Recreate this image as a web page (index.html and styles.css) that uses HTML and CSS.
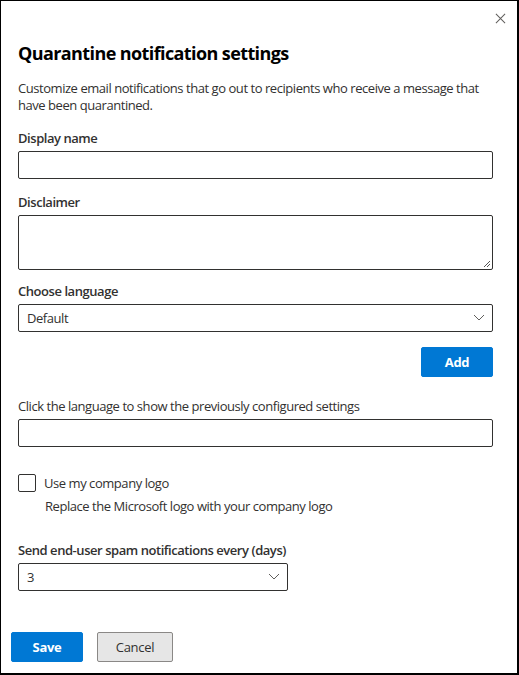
FILE: index.html
```html
<!DOCTYPE html>
<html>
<head>
<meta charset="utf-8">
<link rel="stylesheet" href="styles.css">
</head>
<body>
<div class="panel">
  <div class="top">
    <button class="close" aria-label="Close">
      <svg width="12" height="12" viewBox="0 0 12 12"><path d="M1 1L11 11M11 1L1 11" stroke="#605e5c" stroke-width="1.1" fill="none"/></svg>
    </button>
  </div>
  <h1 class="title">Quarantine notification settings</h1>
  <p class="desc">Customize email notifications that go out to recipients who receive a message that have been quarantined.</p>

  <div class="field first">
    <label class="label">Display name</label>
    <div class="input"></div>
  </div>
  <div class="field f2">
    <label class="label">Disclaimer</label>
    <div class="textarea">
      <svg class="grip" width="9" height="9" viewBox="0 0 9 9"><path d="M8 2L2 8M8 5L5 8" stroke="#555" stroke-width="1"/></svg>
    </div>
  </div>
  <div class="field f3">
    <label class="label">Choose language</label>
    <div class="select">
      <span>Default</span>
      <svg class="chev" width="12" height="7" viewBox="0 0 12 7"><path d="M1 1L6 6L11 1" stroke="#605e5c" stroke-width="1" fill="none"/></svg>
    </div>
  </div>
  <div class="addrow"><button class="btn primary">Add</button></div>

  <div class="field after-add">
    <label class="label normal">Click the language to show the previously configured settings</label>
    <div class="input"></div>
  </div>

  <div class="check">
    <span class="box"></span>
    <span class="checktext">Use my company logo</span>
  </div>
  <p class="hint">Replace the Microsoft logo with your company logo</p>

  <div class="field days">
    <label class="label">Send end-user spam notifications every (days)</label>
    <div class="select small">
      <span>3</span>
      <svg class="chev" width="12" height="7" viewBox="0 0 12 7"><path d="M1 1L6 6L11 1" stroke="#605e5c" stroke-width="1" fill="none"/></svg>
    </div>
  </div>

  <div class="footer">
    <button class="btn primary">Save</button>
    <button class="btn secondary">Cancel</button>
  </div>
</div>
</body>
</html>
```

FILE: styles.css
```css
* { box-sizing: border-box; }
html, body { margin: 0; padding: 0; background: #fff; }
body { font-family: "Open Sans", "Noto Sans", Arial, sans-serif; color: #323130; letter-spacing: -0.45px; }
.panel {
  width: 519px;
  height: 675px;
  border: 1px solid #000;
  border-right-width: 2px;
  border-bottom-width: 2px;
  padding: 0 24px 0 17px;
  display: flex;
  flex-direction: column;
  position: relative;
}
.top { height: 36px; }
.close { position: absolute; top: 10px; right: 10px; width: 14px; height: 14px; padding: 0; border: 0; background: none; display: flex; align-items: center; justify-content: center; }
.close svg { width: 11px; height: 11px; }
.title { margin: 4px 0 0; font-size: 18px; font-weight: 700; color: #000; line-height: 24px; letter-spacing: -0.6px; }
.desc { margin: 15px 0 0; font-size: 13px; line-height: 17px; color: #323130; }
.field { margin-top: 14px; }
.field.first { margin-top: 15px; }
.field.f3 { margin-top: 12px; }
.label { display: block; font-size: 13px; font-weight: 600; line-height: 18px; color: #323130; margin-bottom: 4px; }
.label.normal { font-weight: 400; }
.input { height: 28px; border: 1px solid #323130; border-radius: 2px; }
.textarea { height: 55px; border: 1px solid #323130; border-radius: 2px; position: relative; }
.grip { position: absolute; right: 1px; bottom: 1px; }
.select { height: 28px; border: 1px solid #323130; border-radius: 2px; display: flex; align-items: center; justify-content: space-between; padding: 0 7px 0 8px; font-size: 13px; color: #323130; }
.chev { margin-top: -2px; }
.small { width: 270px; }
.addrow { display: flex; justify-content: flex-end; margin-top: 15px; }
.btn { font-family: inherit; font-size: 13px; font-weight: 700; height: 30px; border-radius: 2px; padding: 0; cursor: pointer; letter-spacing: -0.3px; }
.primary { width: 72px; background: #0078d4; border: 1px solid #0078d4; color: #fff; }
.secondary { width: 76px; background: #e6e6e6; border: 1px solid #8a8886; color: #323130; font-weight: 400; }
.field.after-add { margin-top: 20px; }
.check { display: flex; align-items: center; margin-top: 27px; font-size: 13px; }
.box { width: 18px; height: 18px; border: 1px solid #323130; border-radius: 2px; margin-right: 8px; }
.hint { margin: 5px 0 0 27px; font-size: 13px; line-height: 18px; color: #323130; }
.field.days { margin-top: 26px; }
.footer { margin-top: auto; margin-left: -7px; margin-bottom: 11px; display: flex; gap: 14px; }
```
